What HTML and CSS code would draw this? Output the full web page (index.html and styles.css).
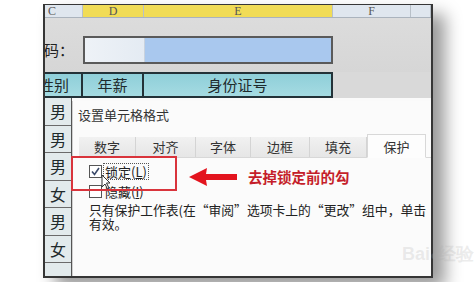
FILE: index.html
```html
<!DOCTYPE html>
<html lang="zh">
<head>
<meta charset="utf-8">
<link rel="stylesheet" href="styles.css">
</head>
<body>
<div class="stage">
  <div class="frame">
    <div class="colhead">
      <div class="ch ch-plain">C</div>
      <div class="ch ch-sel">D</div>
      <div class="ch ch-sel">E</div>
      <div class="ch ch-plain">F</div>
      <div class="ch ch-plain"></div>
    </div>
    <div class="grayarea">
      <div class="label">密码：</div>
      <div class="inputs">
        <div class="in-d"></div>
        <div class="in-e"></div>
      </div>
    </div>
    <div class="thead">
      <div class="th th-a"><span>性别</span></div>
      <div class="th">年薪</div>
      <div class="th">身份证号</div>
    </div>
    <div class="tbody">
      <div class="leftcol">
        <div class="lc">男</div>
        <div class="lc">男</div>
        <div class="lc">男</div>
        <div class="lc">女</div>
        <div class="lc">男</div>
        <div class="lc">女</div>
        <div class="lc lc-last"></div>
      </div>
      <div class="rest"></div>
    </div>

    <div class="dialog">
      <div class="title">设置单元格格式</div>
      <div class="tabs">
        <div class="tab t1">数字</div>
        <div class="tab t2">对齐</div>
        <div class="tab t3">字体</div>
        <div class="tab t4">边框</div>
        <div class="tab t5">填充</div>
        <div class="tab active">保护</div>
      </div>
      <div class="content">
        <div class="cbrow">
          <svg class="cb" width="13" height="13" viewBox="0 0 13 13"><rect x="0.5" y="0.5" width="12" height="12" fill="#fff" stroke="#555"/><path d="M3 6.5 L5.5 9.5 L10 3" fill="none" stroke="#3a4a6a" stroke-width="1.6"/></svg>
          <span class="focus">锁定(<u>L</u>)</span>
        </div>
        <div class="cbrow">
          <svg class="cb" width="13" height="13" viewBox="0 0 13 13"><rect x="0.5" y="0.5" width="12" height="12" fill="#fff" stroke="#555"/></svg>
          <span class="lbl">隐藏(<u>I</u>)</span>
        </div>
        <p class="desc">只有保护工作表(在“审阅”选项卡上的“更改”组中，单击<br>有效。</p>
      </div>
      <div class="redbox"></div>
      <svg class="arrow" width="52" height="22" viewBox="0 0 52 22"><path d="M2 11 L20 2 L19 8 L50 8 L50 14 L19 14 L20 20 Z" fill="#e3141e"/></svg>
      <div class="note">去掉锁定前的勾</div>
      <svg class="cursor" width="10" height="16" viewBox="0 0 10 16"><path d="M1 1 L1 13 L4 10 L6.5 15 L8 14 L5.5 9 L9 9 Z" fill="#fff" stroke="#333" stroke-width="1"/></svg>
    </div>
  </div>
  <div class="watermark">Bai<span class="paw">●</span>经验</div>
</div>
</body>
</html>
```

FILE: styles.css
```css
html, body {
  margin: 0;
  padding: 0;
  background: #ffffff;
}
body {
  width: 474px;
  height: 282px;
  overflow: hidden;
  font-family: "Noto Sans CJK SC", "Noto Sans", sans-serif;
  color: #222;
}
.stage {
  position: relative;
  width: 474px;
  height: 282px;
  padding: 4px 0 0 43px;
  box-sizing: border-box;
}
.frame {
  position: relative;
  width: 390px;
  height: 274px;
  box-sizing: border-box;
  border: 2px solid #363636;
  border-top-width: 1px;
  background: #d9d9d9;
  box-shadow: 12px 10px 16px rgba(0, 0, 0, 0.4);
  overflow: hidden;
}
.colhead {
  display: grid;
  grid-template-columns: 38px 61px 189px 78px 1fr;
  height: 12px;
  border-bottom: 1px solid #aab3bd;
}
.ch {
  font-family: "Liberation Serif", serif;
  font-size: 12px;
  line-height: 12px;
  text-align: center;
  color: #555;
  border-right: 1px solid #b8c0c8;
}
.ch-plain { background: #dfe6ee; }
.ch-plain:first-child { text-align: left; padding-left: 3px; }
.ch-sel { background: #f1dc56; }
.grayarea {
  display: flex;
  height: 54px;
  padding-top: 18px;
  box-sizing: border-box;
  background: linear-gradient(#dcdcdc, #d6d6d6);
}
.label {
  width: 38px;
  overflow: hidden;
  display: flex;
  justify-content: flex-end;
  white-space: nowrap;
  font-size: 15px;
  line-height: 28px;
  padding-right: 9px;
  box-sizing: border-box;
  color: #222;
}
.inputs {
  display: flex;
  width: 250px;
  height: 28px;
  box-sizing: border-box;
  border: 2px solid #5a5a5a;
}
.in-d {
  width: 59px;
  background: linear-gradient(90deg, #eef2f7, #e4ebf3);
  border-right: 1px solid #c8d2de;
}
.in-e {
  flex: 1;
  background: #a9c8ee;
}
.thead {
  display: flex;
  height: 26px;
  box-sizing: border-box;
  border-top: 2px solid #233238;
  border-bottom: 2px solid #233238;
  width: 288px;
  background: linear-gradient(#8fcfd9, #a5dbe2);
}
.th {
  font-size: 15px;
  line-height: 22px;
  text-align: center;
  border-right: 2px solid #233238;
  box-sizing: border-box;
  color: #1e2a2c;
}
.th:nth-child(2) { width: 61px; }
.th:nth-child(3) { width: 189px; }
.th-a {
  width: 38px;
  overflow: hidden;
  display: flex;
  justify-content: flex-end;
  white-space: nowrap;
  padding-right: 12px;
}
.tbody {
  display: flex;
  height: 180px;
}
.leftcol {
  width: 26px;
  display: flex;
  flex-direction: column;
  border-right: 1px solid #555;
}
.lc {
  height: 27.5px;
  box-sizing: border-box;
  border-bottom: 1px solid #6a6a6a;
  background: #e2eaec;
  font-size: 16px;
  line-height: 26px;
  text-align: center;
  color: #1f2a2c;
}
.lc-last {
  flex: 1;
  border-bottom: none;
}
.rest {
  flex: 1;
  background: #fafafa;
}
.dialog {
  position: absolute;
  left: 27px;
  top: 96px;
  right: 0;
  bottom: 0;
  background: #fbfbfb;
  border-left: 1px solid #d0d0d0;
}
.title {
  height: 32px;
  padding: 6px 0 0 5px;
  box-sizing: border-box;
  font-size: 13px;
  line-height: 16px;
  color: #333;
}
.tabs {
  display: flex;
  align-items: flex-end;
  height: 25px;
  padding-left: 6px;
  border-bottom: 1px solid #d8d8d8;
  box-sizing: border-box;
}
.tab {
  height: 20px;
  box-sizing: border-box;
  background: linear-gradient(#f1f1f1, #e6e6e6);
  border-right: 1px solid #d4d4d4;
  font-size: 13px;
  line-height: 20px;
  text-align: center;
  color: #333;
}
.t1 { width: 57px; }
.t2 { width: 60px; }
.t3 { width: 55px; }
.t4 { width: 59px; }
.t5 { width: 57px; }
.tab.active {
  width: 59px;
  height: 24px;
  line-height: 24px;
  background: #fdfdfd;
  border: 1px solid #d8d8d8;
  border-bottom: 1px solid #fdfdfd;
  margin-bottom: -1px;
}
.content {
  padding: 5px 0 0 16px;
}
.cbrow {
  display: flex;
  align-items: center;
  height: 17px;
  margin-bottom: 3px;
  font-size: 13px;
}
.cb {
  display: block;
  margin-right: 1px;
}
.focus {
  border: 1px dotted #555;
  padding: 0 1px;
  line-height: 15px;
}
.lbl {
  padding-left: 2px;
  line-height: 15px;
}
.desc {
  margin: 0;
  font-size: 12.8px;
  line-height: 14px;
  color: #222;
  white-space: nowrap;
}
.redbox {
  position: absolute;
  left: -2px;
  top: 55px;
  width: 106px;
  height: 35px;
  box-sizing: border-box;
  border: 2px solid #d9343c;
}
.arrow {
  position: absolute;
  left: 114px;
  top: 65px;
}
.note {
  position: absolute;
  left: 175px;
  top: 67px;
  font-size: 14.5px;
  line-height: 18px;
  font-weight: bold;
  color: #c51e2a;
  white-space: nowrap;
}
.cursor {
  position: absolute;
  left: 28px;
  top: 73px;
}
.watermark {
  position: absolute;
  left: 402px;
  top: 242px;
  font-family: "Liberation Sans", sans-serif;
  font-size: 18px;
  font-weight: bold;
  color: rgba(170, 170, 170, 0.22);
  white-space: nowrap;
}
.paw {
  font-size: 14px;
}
```
